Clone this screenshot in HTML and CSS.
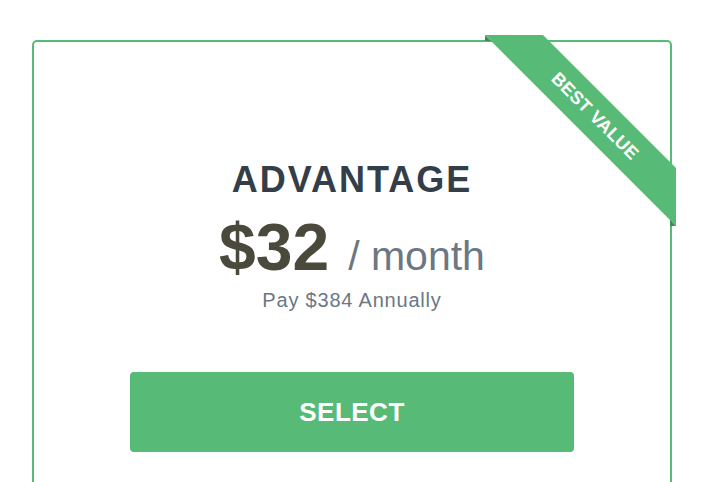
FILE: index.html
```html
<!DOCTYPE html>
<html lang="en">
<head>
<meta charset="utf-8">
<title>Advantage plan</title>
<link rel="stylesheet" href="styles.css">
</head>
<body>
<div class="page">
  <div class="card">
    <div class="ribbon">
      <div class="ribbon-band"></div>
      <span class="ribbon-text">BEST VALUE</span>
    </div>
    <h2 class="plan-name">ADVANTAGE</h2>
    <div class="price-row">
      <span class="price">$32</span>
      <span class="period">/ month</span>
    </div>
    <p class="annual">Pay $384 Annually</p>
    <button class="select-btn" type="button">SELECT</button>
  </div>
</div>
</body>
</html>
```
FILE: styles.css
```css
html, body {
  margin: 0;
  padding: 0;
  overflow: hidden;
  background: #ffffff;
}

body {
  font-family: "Liberation Sans", Arial, sans-serif;
}

.page {
  box-sizing: border-box;
  height: 100vh;
  overflow: hidden;
  padding: 40px 0 0 32px;
}

.card {
  position: relative;
  box-sizing: border-box;
  width: 640px;
  height: 470px;
  border: 2px solid #57bb77;
  border-radius: 5px;
  display: flex;
  flex-direction: column;
  align-items: center;
  padding-top: 120px;
}

.ribbon {
  position: absolute;
  top: -7px;
  right: -6px;
  width: 191px;
  height: 191px;
}

.ribbon::before,
.ribbon::after {
  content: "";
  position: absolute;
  width: 6px;
  height: 6px;
  background: #3d8c56;
  clip-path: polygon(0 0, 0 100%, 100% 100%);
}

.ribbon::before {
  left: 0;
  top: 0;
}

.ribbon::after {
  right: 0;
  bottom: 0;
}

.ribbon-band {
  position: absolute;
  inset: 0;
  background: #57bb77;
  clip-path: polygon(0 0, 58px 0, 100% 133px, 100% 100%);
}

.ribbon-text {
  position: absolute;
  left: 110px;
  top: 81px;
  transform: translate(-50%, -50%) rotate(45deg);
  color: #ffffff;
  font-weight: 700;
  font-size: 18px;
  line-height: 18px;
  white-space: nowrap;
  letter-spacing: 0.2px;
}

.plan-name {
  margin: 0;
  font-size: 36px;
  line-height: 36px;
  font-weight: 700;
  color: #333e48;
  letter-spacing: 2px;
}

.price-row {
  display: flex;
  align-items: baseline;
  margin-top: 16px;
  line-height: 1;
}

.price {
  font-size: 66px;
  font-weight: 700;
  color: #4a493c;
}

.period {
  font-size: 41px;
  color: #6b7783;
  margin-left: 19px;
}

.annual {
  margin: 10px 0 0;
  font-size: 20px;
  line-height: 20px;
  color: #6b7783;
  letter-spacing: 0.8px;
}

.select-btn {
  margin-top: 62px;
  width: 444px;
  height: 80px;
  border: none;
  border-radius: 4px;
  background: #57bb77;
  color: #ffffff;
  font-family: "Liberation Sans", Arial, sans-serif;
  font-size: 26px;
  font-weight: 700;
  letter-spacing: 0.5px;
  display: flex;
  align-items: center;
  justify-content: center;
  padding: 0;
}
```
